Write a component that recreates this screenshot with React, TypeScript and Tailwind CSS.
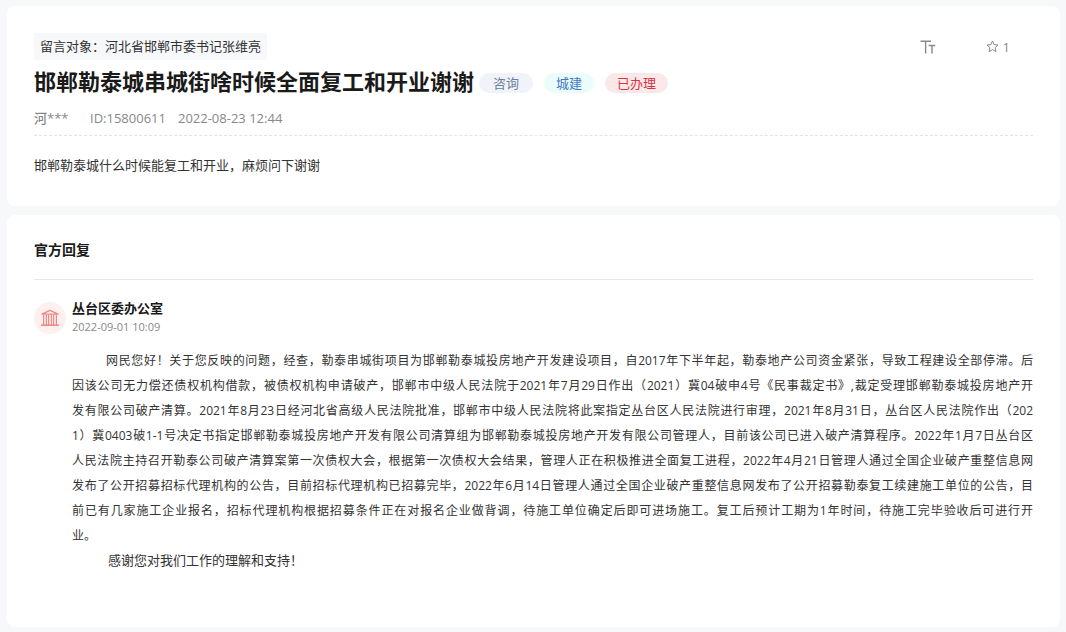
const tags: { label: string; style: string }[] = [
  { label: "咨询", style: "bg-[#f0f4fa] text-[#6d7f9c] px-3.5" },
  { label: "城建", style: "bg-[#ebfdfb] text-[#3f78c8] px-3" },
  { label: "已办理", style: "bg-[#fbe9ea] text-[#d9333f] px-3" },
];

// Each full line is justified to both margins
const replyLines: string[] = [
  "网民您好！关于您反映的问题，经查，勒泰串城街项目为邯郸勒泰城投房地产开发建设项目，自2017年下半年起，勒泰地产公司资金紧张，导致工程建设全部停滞。后",
  "因该公司无力偿还债权机构借款，被债权机构申请破产，邯郸市中级人民法院于2021年7月29日作出（2021）冀04破申4号《民事裁定书》,裁定受理邯郸勒泰城投房地产开",
  "发有限公司破产清算。2021年8月23日经河北省高级人民法院批准，邯郸市中级人民法院将此案指定丛台区人民法院进行审理，2021年8月31日，丛台区人民法院作出（202",
  "1）冀0403破1-1号决定书指定邯郸勒泰城投房地产开发有限公司清算组为邯郸勒泰城投房地产开发有限公司管理人，目前该公司已进入破产清算程序。2022年1月7日丛台区",
  "人民法院主持召开勒泰公司破产清算案第一次债权大会，根据第一次债权大会结果，管理人正在积极推进全面复工进程，2022年4月21日管理人通过全国企业破产重整信息网",
  "发布了公开招募招标代理机构的公告，目前招标代理机构已招募完毕，2022年6月14日管理人通过全国企业破产重整信息网发布了公开招募勒泰复工续建施工单位的公告，目",
  "前已有几家施工企业报名，招标代理机构根据招募条件正在对报名企业做背调，待施工单位确定后即可进场施工。复工后预计工期为1年时间，待施工完毕验收后可进行开",
];

function FontSizeIcon() {
  return (
    <svg width="16" height="14" viewBox="0 0 16 14" fill="none" stroke="currentColor" strokeWidth="1.4">
      <path d="M0.5 1.2H11M5.6 1.2V13.6M8.6 5.5H15.2M12 5.5V13.6" />
    </svg>
  );
}

function StarIcon() {
  return (
    <svg width="13" height="13" viewBox="0 0 13 13" fill="none" stroke="currentColor" strokeLinejoin="round">
      <path d="M6.5 1L8.1 4.6L12 5L9.1 7.7L9.9 11.6L6.5 9.6L3.1 11.6L3.9 7.7L1 5L4.9 4.6Z" />
    </svg>
  );
}

function OfficeIcon() {
  return (
    <svg width="18" height="18" viewBox="0 0 18 18" fill="none" stroke="currentColor">
      <path d="M1 5.2L9 1.3L17 5.2Z" strokeWidth="1.3" strokeLinejoin="round" />
      <path d="M0 16.2H18" strokeWidth="1.6" />
      <path d="M2.6 6V16M5.4 6V16M7.6 6V16M10.4 6V16M12.6 6V16M15.4 6V16" strokeWidth="1.2" />
    </svg>
  );
}

function MessageCard() {
  return (
    <section className="bg-white rounded-lg px-[27px] pt-[27px] pb-[29px]">
      <div className="flex items-center justify-between">
        <div className="bg-[#f7f8fa] rounded-xs px-1.5 h-[27px] leading-[27px] text-[13px] text-[#333]">
          留言对象：河北省邯郸市委书记张维亮
        </div>
        <div className="flex items-center gap-[50px] pr-[23px] text-[#888]">
          <button type="button" aria-label="字号" className="cursor-pointer">
            <FontSizeIcon />
          </button>
          <button type="button" aria-label="收藏" className="flex items-center gap-1 text-[13px] leading-5 cursor-pointer">
            <StarIcon />
            <span>1</span>
          </button>
        </div>
      </div>

      <div className="flex items-center gap-[5px] mt-[5px]">
        <h1 className="text-[22px] leading-8 font-bold text-[#1a1a1a]">
          邯郸勒泰城串城街啥时候全面复工和开业谢谢
        </h1>
        <div className="flex gap-[11px] pt-1">
          {tags.map((tag) => (
            <span key={tag.label} className={`rounded-full h-5 leading-5 text-[13px] ${tag.style}`}>
              {tag.label}
            </span>
          ))}
        </div>
      </div>

      <div className="flex border-b border-dashed border-[#e3e3e3] mt-2.5 pb-1.5 text-[13px] leading-[22px] text-[#888]">
        <span className="w-14 font-medium">河***</span>
        <span className="mr-3">ID:15800611</span>
        <span>2022-08-23 12:44</span>
      </div>

      <p className="mt-[17px] text-[13px] leading-6 text-[#333]">
        邯郸勒泰城什么时候能复工和开业，麻烦问下谢谢
      </p>
    </section>
  );
}

function ReplyCard() {
  return (
    <section className="bg-white rounded-lg px-[27px] pt-6 pb-[54px]">
      <h2 className="border-b border-[#e6e6e6] pb-[18px] text-[14px] leading-[22px] font-bold text-[#1a1a1a]">
        官方回复
      </h2>

      <div className="flex items-start gap-1.5 mt-[22px]">
        <div className="flex items-center justify-center size-8 rounded-full bg-[#ffefef] text-[#ea8a86]">
          <OfficeIcon />
        </div>
        <div>
          <h3 className="text-[13px] leading-3 font-bold text-[#1a1a1a]">丛台区委办公室</h3>
          <p className="mt-[5px] text-[11px] leading-4 text-[#888]">2022-09-01 10:09</p>
        </div>
      </div>

      <div className="mt-[13px] pl-[38px] leading-[25px] text-[#333]">
        <p className="text-[12px] indent-[34px]">
          {replyLines.map((line) => (
            <span key={line} className="block text-justify [text-align-last:justify] not-first:indent-0">
              {line}
            </span>
          ))}
          <span className="block indent-0">业。</span>
        </p>
        <p className="text-[13px] indent-9">感谢您对我们工作的理解和支持！</p>
      </div>
    </section>
  );
}

export default function App() {
  return (
    <main
      lang="zh-CN"
      className="min-h-screen flex flex-col gap-[9px] bg-[#f7f8fa] pl-[7px] pr-1.5 pt-1.5 pb-[5px] font-['Open_Sans','Noto_Sans_CJK_SC',sans-serif]"
    >
      <MessageCard />
      <ReplyCard />
    </main>
  );
}
